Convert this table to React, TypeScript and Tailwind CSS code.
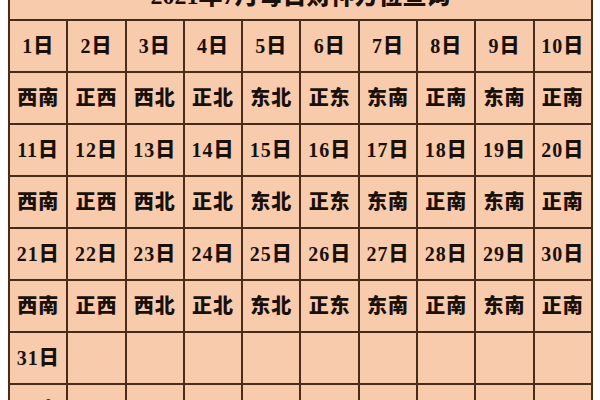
const directions = ['西南', '正西', '西北', '正北', '东北', '正东', '东南', '正南', '东南', '正南']

const rows: string[][] = [
  Array.from({ length: 10 }, (_, i) => `${i + 1}日`),
  directions,
  Array.from({ length: 10 }, (_, i) => `${i + 11}日`),
  directions,
  Array.from({ length: 10 }, (_, i) => `${i + 21}日`),
  directions,
  ['31日', '', '', '', '', '', '', '', '', ''],
  ['西南', '', '', '', '', '', '', '', '', ''],
]

export default function App() {
  return (
    <div className="h-[400px] w-[600px] overflow-hidden bg-white">
      <table
        className="-mt-[33px] ml-[8px] w-[585px] table-fixed border-collapse bg-[#f8cbad] text-[#1a100a]"
        style={{ fontFamily: '"Liberation Serif", "Noto Sans CJK SC", serif' }}
      >
        <tbody>
          <tr className="h-[52px]">
            <td colSpan={10} className="border-2 border-[#4a2c1c] pt-[4px] text-center text-[24px] font-black">
              2021年7月每日财神方位查询
            </td>
          </tr>
          {rows.map((row, r) => (
            <tr key={r} className="h-[52px]">
              {row.map((cell, c) => (
                <td
                  key={c}
                  className="border-2 border-[#4a2c1c] p-0 text-center text-[20px] font-black tracking-[1px]"
                >
                  {cell}
                </td>
              ))}
            </tr>
          ))}
        </tbody>
      </table>
    </div>
  )
}
